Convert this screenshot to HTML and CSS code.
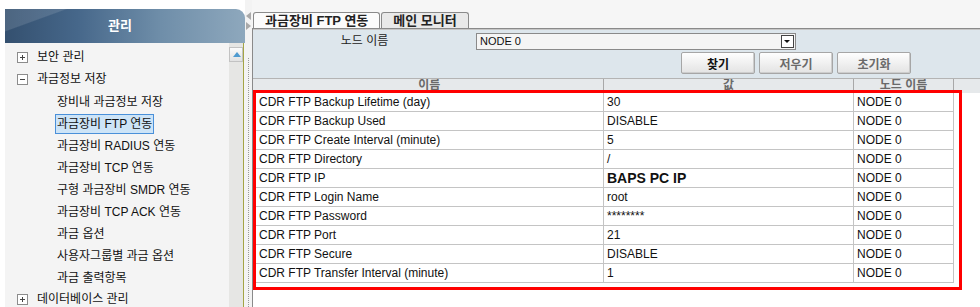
FILE: index.html
```html
<!DOCTYPE html>
<html lang="ko">
<head>
	<meta charset="UTF-8">
	<title>관리</title>
	<link rel="stylesheet" href="styles.css">
</head>
<body>
	<section class="warp">
		<aside class="side">
			<header class="sideHead">관리</header>
			<div class="sideBody">
				<ul class="tree">
					<li class="fold"><i class="box plus"></i>보안 관리</li>
					<li class="fold"><i class="box"></i>과금정보 저장</li>
					<li class="leaf"><span>장비내 과금정보 저장</span></li>
					<li class="leaf"><span class="on">과금장비 FTP 연동</span></li>
					<li class="leaf"><span>과금장비 RADIUS 연동</span></li>
					<li class="leaf"><span>과금장비 TCP 연동</span></li>
					<li class="leaf"><span>구형 과금장비 SMDR 연동</span></li>
					<li class="leaf"><span>과금장비 TCP ACK 연동</span></li>
					<li class="leaf"><span>과금 옵션</span></li>
					<li class="leaf"><span>사용자그룹별 과금 옵션</span></li>
					<li class="leaf"><span>과금 출력항목</span></li>
					<li class="fold"><i class="box plus"></i>데이터베이스 관리</li>
				</ul>
				<div class="scroll"><span class="scrollUp"></span></div>
			</div>
		</aside>

		<div class="splitter">
			<span class="arrL"></span>
			<span class="arrR"></span>
		</div>

		<section class="main">
			<nav class="tabs">
				<span class="tab active">과금장비 FTP 연동</span>
				<span class="tab">메인 모니터</span>
			</nav>
			<div class="panel">
				<form class="search" action="">
					<div class="row">
						<label class="lbl">노드 이름</label>
						<div class="select">NODE 0<span class="arrow"></span></div>
					</div>
					<div class="btns">
						<button type="button" class="btn strong">찾기</button>
						<button type="button" class="btn">저우기</button>
						<button type="button" class="btn">초기화</button>
					</div>
				</form>
				<div class="grid">
					<table>
						<colgroup>
							<col class="c1"><col class="c2"><col class="c3">
						</colgroup>
						<thead>
							<tr><th>이름</th><th>값</th><th>노드 이름</th></tr>
						</thead>
						<tbody>
							<tr><td>CDR FTP Backup Lifetime (day)</td><td>30</td><td>NODE 0</td></tr>
							<tr><td>CDR FTP Backup Used</td><td>DISABLE</td><td>NODE 0</td></tr>
							<tr><td>CDR FTP Create Interval (minute)</td><td>5</td><td>NODE 0</td></tr>
							<tr><td>CDR FTP Directory</td><td>/</td><td>NODE 0</td></tr>
							<tr><td>CDR FTP IP</td><td class="big">BAPS PC IP</td><td>NODE 0</td></tr>
							<tr><td>CDR FTP Login Name</td><td>root</td><td>NODE 0</td></tr>
							<tr><td>CDR FTP Password</td><td class="pw">********</td><td>NODE 0</td></tr>
							<tr><td>CDR FTP Port</td><td>21</td><td>NODE 0</td></tr>
							<tr><td>CDR FTP Secure</td><td>DISABLE</td><td>NODE 0</td></tr>
							<tr><td>CDR FTP Transfer Interval (minute)</td><td>1</td><td>NODE 0</td></tr>
						</tbody>
					</table>
					<div class="mark"></div>
				</div>
			</div>
		</section>
	</section>
</body>
</html>
```

FILE: styles.css
```css
body{
	margin:0;
	background:#fff;
	font-family:"Liberation Sans","Noto Sans CJK KR",sans-serif;
	font-size:12px;
	color:#111;
}
ul,li{
	margin:0;
	padding:0;
	list-style:none;
}
.warp{
	display:flex;
	width:980px;
	height:307px;
	overflow:hidden;
}

/* left menu */
.side{
	display:flex;
	flex-direction:column;
	width:240px;
	margin-left:5px;
	padding-top:9px;
}
.sideHead{
	height:34px;
	line-height:34px;
	padding-right:10px;
	text-align:center;
	font-size:13px;
	font-weight:bold;
	color:#fff;
	border-radius:0 9px 0 0;
	background:linear-gradient(160deg,rgba(255,255,255,.12) 0 18%,rgba(255,255,255,0) 19%),
		linear-gradient(90deg,#34506f 0%,#46678a 30%,#6f8ea9 65%,#8ea8bd 100%);
}
.sideBody{
	flex:1;
	display:flex;
	background:#f4f4f4;
}
.tree{
	flex:1;
	padding-top:3px;
	font-size:12px;
}
.tree li{
	height:22px;
	line-height:22px;
	white-space:nowrap;
}
.fold{
	display:flex;
	align-items:center;
	padding-left:12px;
}
.box{
	position:relative;
	width:9px;
	height:9px;
	margin-right:9px;
	border:1px solid #8c8c8c;
	background:#fff;
}
.box:before{
	content:"";
	position:absolute;
	left:2px;
	top:4px;
	width:5px;
	height:1px;
	background:#444;
}
.plus:after{
	content:"";
	position:absolute;
	left:4px;
	top:2px;
	width:1px;
	height:5px;
	background:#444;
}
.leaf{
	padding-left:50px;
}
.leaf span{
	display:inline-block;
	line-height:18px;
	padding:0 1px;
	border:1px solid transparent;
	vertical-align:middle;
}
.leaf .on{
	background:#cde4f7;
	border-color:#4a90d9;
}
.scroll{
	width:14px;
	margin-right:1px;
	padding-top:4px;
	background:#e6e6e4;
	border-right:1px solid #a4a445;
}
.scrollUp{
	display:block;
	position:relative;
	height:13px;
	border:1px solid #c2c2c2;
	background:linear-gradient(#fbfbfb,#e2e2e2);
}
.scrollUp:after{
	content:"";
	position:absolute;
	left:3px;
	top:4px;
	border-left:4px solid transparent;
	border-right:4px solid transparent;
	border-bottom:5px solid #4f9bd0;
}

/* splitter */
.splitter{
	position:relative;
	width:7px;
	background:#f3f3f3;
}
.splitter:after{
	content:"";
	position:absolute;
	left:3px;
	top:58px;
	bottom:0;
	border-left:1px dotted #9a9a9a;
}
.arrL,.arrR{
	position:absolute;
	left:1px;
	border-top:4px solid transparent;
	border-bottom:4px solid transparent;
}
.arrL{
	top:12px;
	border-right:5px solid #a9a9a9;
}
.arrR{
	top:22px;
	border-left:5px solid #a9a9a9;
}

/* right content */
.main{
	flex:1;
	display:flex;
	flex-direction:column;
	background:#f6f6f6;
}
.tabs{
	display:flex;
	height:16px;
	padding:12px 0 0 1px;
}
.tab{
	height:15px;
	line-height:16px;
	padding:0 11px;
	margin-right:1px;
	border:1px solid #8a8a8a;
	border-bottom:0;
	border-radius:3px 3px 0 0;
	background:#e9e9e9;
	font-size:13px;
	font-weight:bold;
	color:#222;
	white-space:nowrap;
}
.tab.active{
	background:#fbfbfb;
}
.panel{
	flex:1;
	display:flex;
	flex-direction:column;
	border-top:1px solid #8a8a8a;
	border-left:1px solid #8a8a8a;
	background:#fff;
}
.search{
	height:45px;
	margin:0;
	padding-top:4px;
	background:#dde6ec;
	box-shadow:inset 0 1px #c6c6c6;
}
.row{
	display:flex;
	height:17px;
}
.lbl{
	width:223px;
	line-height:17px;
	text-align:center;
	color:#222;
}
.select{
	position:relative;
	width:315px;
	height:15px;
	line-height:15px;
	padding-left:3px;
	border:1px solid #8a8a8a;
	background:#f5f5f5;
	font-size:11px;
	color:#111;
	box-sizing:content-box;
}
.arrow{
	position:absolute;
	right:1px;
	top:1px;
	width:11px;
	height:11px;
	border:1px solid #444;
	background:#fff;
}
.arrow:after{
	content:"";
	position:absolute;
	left:2px;
	top:4px;
	border-left:3px solid transparent;
	border-right:3px solid transparent;
	border-top:3px solid #111;
}
.btns{
	display:flex;
	gap:4px;
	margin-top:2px;
	padding-left:428px;
}
.btn{
	width:74px;
	height:22px;
	padding:0;
	border:1px solid #a6a6a6;
	border-radius:2px;
	background:linear-gradient(#fefefe,#e3e3e3);
	box-shadow:inset -1px -1px #cdcdcd;
	font-family:inherit;
	font-size:12px;
	color:#6a6a6a;
	font-weight:bold;
}
.btn.strong{
	color:#111;
}

/* table */
.grid{
	position:relative;
	flex:1;
	border-top:1px solid #b4b4b4;
	background:linear-gradient(#e6e9eb 0 14px,#fff 14px);
}
.grid table{
	width:698px;
	margin-left:2px;
	border-collapse:collapse;
	table-layout:fixed;
}
.c1{width:348px;}
.c2{width:250px;}
.c3{width:100px;}
.grid th{
	height:13px;
	padding:0;
	line-height:13px;
	border-right:1px solid #a8a8a8;
	background:#e6e9eb;
	font-weight:bold;
	color:#6a6a6a;
	overflow:hidden;
}
.grid td{
	height:18px;
	padding:0 0 0 3px;
	line-height:18px;
	border:1px solid #c4c4c4;
	background:#fff;
	white-space:nowrap;
	overflow:hidden;
	color:#111;
}
.grid td.big{
	font-size:14px;
	font-weight:bold;
}
.grid td.pw{
	font-size:12px;
}
.mark{
	position:absolute;
	left:0;
	top:11px;
	width:709px;
	height:200px;
	box-sizing:border-box;
	border:3px solid #f00;
}
```
